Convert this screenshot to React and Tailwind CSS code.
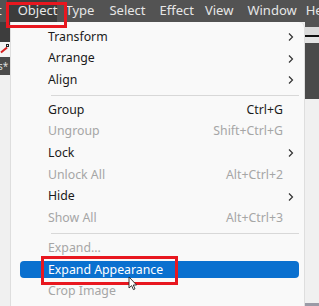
import React from "react";

const font = { fontFamily: '"Noto Sans", "Open Sans", sans-serif' };

const items = [
  { label: "Transform", arrow: true },
  { label: "Arrange", arrow: true },
  { label: "Align", arrow: true },
  { sep: true },
  { label: "Group", shortcut: "Ctrl+G" },
  { label: "Ungroup", shortcut: "Shift+Ctrl+G", disabled: true },
  { label: "Lock", arrow: true },
  { label: "Unlock All", shortcut: "Alt+Ctrl+2", disabled: true },
  { label: "Hide", arrow: true },
  { label: "Show All", shortcut: "Alt+Ctrl+3", disabled: true },
  { sep: true },
  { label: "Expand...", disabled: true },
  { label: "Expand Appearance", active: true },
  { label: "Crop Image", disabled: true },
];

function Chevron() {
  return (
    <svg width="8" height="10" viewBox="0 0 8 10" className="text-[#333]">
      <path d="M2 1.5 L5.5 5 L2 8.5" fill="none" stroke="currentColor" strokeWidth="1.2" />
    </svg>
  );
}

function MenuRow({ item }) {
  if (item.sep) {
    return (
      <div className="h-[8px] flex items-center pl-[40px] pr-[5px]">
        <div className="h-px w-full bg-[#d8d8d8]" />
      </div>
    );
  }
  const color = item.active
    ? "text-white"
    : item.disabled
    ? "text-[#a6a6a6]"
    : "text-[#1b1b1b]";
  return (
    <div className="relative h-[21.7px] flex items-center">
      {item.active && (
        <div className="absolute left-[9px] right-[5px] top-[2px] bottom-[3px] rounded-[4px] bg-[#0a70cf]" />
      )}
      <span className={`relative pl-[37px] flex-1 text-[12.3px] ${color}`}>{item.label}</span>
      {item.shortcut && (
        <span className={`relative pr-[21px] text-[12.3px] ${color}`}>{item.shortcut}</span>
      )}
      {item.arrow && (
        <span className="relative pr-[9px] flex items-center">
          <Chevron />
        </span>
      )}
      {item.active && (
        <>
          <div className="absolute left-[30px] top-[-3px] w-[137px] h-[29px] border-[3px] border-[#e8171f]" />
          <svg className="absolute left-[117px] top-[17px]" width="10" height="15" viewBox="0 0 10 15">
            <path d="M1 1 L1 12 L3.6 9.6 L5.4 13.6 L7 12.9 L5.3 9 L8.6 9 Z" fill="#fff" stroke="#222" strokeWidth="0.9" />
          </svg>
        </>
      )}
    </div>
  );
}

export default function App() {
  return (
    <div className="relative w-[319px] h-[306px] overflow-hidden bg-[#f0f0f0]" style={font}>
      {/* menubar */}
      <div className="h-[22px] bg-[#535353] flex items-center text-[13px] text-[#e6e6e6] whitespace-nowrap">
        <span className="ml-[-3px] w-[9px]">t</span>
        <span className="ml-[5px] h-full w-[59px] bg-[#3c3c3c] flex items-center pl-[11px]">Object</span>
        <span className="ml-[8px]">Type</span>
        <span className="ml-[15px]">Select</span>
        <span className="ml-[14px]">Effect</span>
        <span className="ml-[11px]">View</span>
        <span className="ml-[14px]">Window</span>
        <span className="ml-[9px]">Help</span>
      </div>
      <div className="absolute left-[6px] top-[2px] w-[61px] h-[26px] border-[3px] border-[#e8171f]" />

      <div className="flex h-[284px]">
        {/* left app strip */}
        <div className="w-[10px] flex flex-col">
          <div className="h-[20px] bg-[#3d3d3d]" />
          <div className="h-[15px] bg-[#f4f4f4] relative">
            <div className="absolute left-[0px] top-[7px] w-[8px] h-[2px] bg-[#d61f1f] rotate-[-40deg]" />
            <div className="absolute left-[6px] top-[2px] w-[3px] h-[3px] border border-[#222]" />
          </div>
          <div className="h-[18px] bg-[#4a4a4a] text-[10px] text-[#ddd] leading-[18px] -ml-[2px] overflow-hidden">s*</div>
          <div className="flex-1 bg-[#f0f0f0]" />
        </div>

        {/* dropdown */}
        <div className="w-[295px] bg-[#f9f9f9] border-l border-r border-[#dedede] rounded-tr-[6px] pt-[4px]">
          {items.map((it, i) => (
            <MenuRow key={i} item={it} />
          ))}
        </div>

        {/* right app strip */}
        <div className="flex-1 flex flex-col">
          <div className="h-[5px] bg-[#535353]" />
          <div className="h-[8px] bg-[#dadada]" />
          <div className="h-[2px] bg-[#111]" />
          <div className="h-[6px] bg-[#e4e4e4]" />
          <div className="h-[56px] bg-[#4a4a4a]" />
          <div className="flex-1 bg-[#f0f0f0]" />
          <div className="h-[3px] bg-[#9a9aa6]" />
        </div>
      </div>
    </div>
  );
}
